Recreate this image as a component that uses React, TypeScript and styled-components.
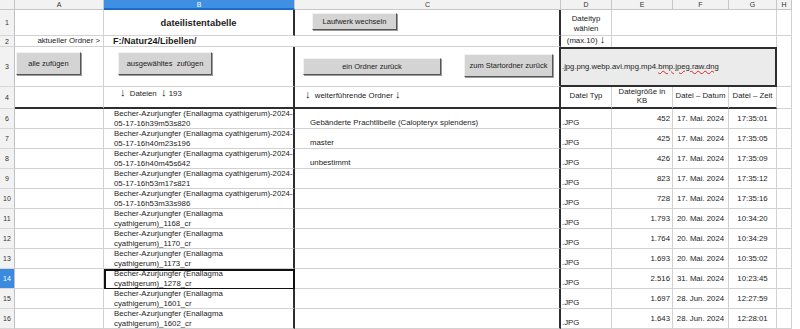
import { FC } from "react";
import styled, { createGlobalStyle } from "styled-components";

const GlobalStyle = createGlobalStyle`
  html, body {
    margin: 0;
    padding: 0;
    background: #ffffff;
  }
  body {
    font-family: "Liberation Sans", Arial, sans-serif;
    overflow: hidden;
  }
`;

const GRID = "#d2d2d2";
const THICK = "2px solid #2e2e2e";

type Align = "flex-start" | "center" | "flex-end";

const Sheet = styled.div`
  display: grid;
  grid-template-columns: 15px 89px 191px 266px 51px 61px 56px 48px 15px 1fr;
  grid-template-rows: 10px 26px 11px 40px 22px repeat(11, 20px);
  width: 800px;
  height: 329px;
  overflow: hidden;
  color: #1c1c1c;
`;

const ColHead = styled.div<{ $active?: boolean; $blank?: boolean }>`
  display: flex;
  align-items: center;
  justify-content: center;
  box-sizing: border-box;
  font-size: 7px;
  background: ${(p) => (p.$active ? "#3f8fe2" : p.$blank ? "#ffffff" : "#f2f2f2")};
  color: ${(p) => (p.$active ? "#ffffff" : "#333333")};
  border-right: ${(p) => (p.$blank ? "none" : "1px solid #c6c6c6")};
  border-bottom: ${(p) =>
    p.$active ? "2px solid #1d6cc8" : p.$blank ? "none" : "1px solid #c6c6c6"};
`;

const RowNum = styled.div<{ $active?: boolean }>`
  display: flex;
  align-items: center;
  justify-content: center;
  box-sizing: border-box;
  font-size: 7px;
  background: ${(p) => (p.$active ? "#3a8be0" : "#f2f2f2")};
  color: ${(p) => (p.$active ? "#ffffff" : "#333333")};
  border-right: 1px solid #c0c0c0;
  border-bottom: 1px solid #d6d6d6;
`;

const Cell = styled.div<{
  $span?: number;
  $h?: Align;
  $v?: Align;
  $pad?: string;
  $thickR?: boolean;
  $thickB?: boolean;
  $noR?: boolean;
  $noB?: boolean;
  $bold?: boolean;
  $size?: number;
  $lh?: number;
}>`
  position: relative;
  grid-column: span ${(p) => p.$span ?? 1};
  display: flex;
  flex-direction: column;
  justify-content: ${(p) => p.$v ?? "center"};
  align-items: ${(p) => p.$h ?? "flex-start"};
  text-align: ${(p) =>
    p.$h === "center" ? "center" : p.$h === "flex-end" ? "right" : "left"};
  padding: ${(p) => p.$pad ?? "0 2px"};
  box-sizing: border-box;
  min-width: 0;
  white-space: nowrap;
  font-size: ${(p) => p.$size ?? 7.8}px;
  line-height: ${(p) => p.$lh ?? 10}px;
  font-weight: ${(p) => (p.$bold ? 700 : 400)};
  background: #ffffff;
  border-right: ${(p) =>
    p.$thickR ? THICK : p.$noR ? "none" : `1px solid ${GRID}`};
  border-bottom: ${(p) =>
    p.$thickB ? THICK : p.$noB ? "none" : `1px solid ${GRID}`};
`;

const Blank = styled.div`
  background: #ffffff;
`;

const FilterBox = styled.div`
  grid-column: span 4;
  display: flex;
  align-items: center;
  box-sizing: border-box;
  padding-left: 1px;
  padding-bottom: 2px;
  background: #ebebeb;
  border-top: ${THICK};
  border-right: ${THICK};
  border-bottom: ${THICK};
  font-size: 7.7px;
  white-space: nowrap;
  color: #1c1c1c;
`;

const Misspelled = styled.span`
  text-decoration-line: underline;
  text-decoration-style: wavy;
  text-decoration-color: #e02525;
  text-decoration-thickness: 1px;
  text-underline-offset: 1px;
`;

const Arrow = styled.span`
  font-size: 11px;
  line-height: 9px;
`;

const SheetButton = styled.button<{ $w: number; $h: number; $mt?: number }>`
  display: inline-flex;
  align-items: center;
  justify-content: center;
  box-sizing: border-box;
  width: ${(p) => p.$w}px;
  height: ${(p) => p.$h}px;
  margin-top: ${(p) => p.$mt ?? 0}px;
  padding: 0;
  background: #d4d4d4;
  border: 1px solid;
  border-color: #f2f2f2 #555555 #555555 #f2f2f2;
  box-shadow: 1px 1px 0 #9c9c9c;
  font-family: "Liberation Sans", Arial, sans-serif;
  font-size: 7.5px;
  color: #222222;
  white-space: nowrap;
  cursor: pointer;
`;

const ButtonRow = styled.div`
  display: flex;
  align-items: center;
  gap: 23px;
`;

const Selection = styled.div`
  position: absolute;
  left: 0;
  top: 0;
  right: -2px;
  bottom: -2px;
  border: 2px solid #111111;
  pointer-events: none;

  &::after {
    content: "";
    position: absolute;
    right: -4px;
    bottom: -4px;
    width: 4px;
    height: 4px;
    background: #111111;
  }
`;

type FileRow = {
  n: number;
  first: string;
  second: string;
  folder?: string;
  size: string;
  date: string;
  time: string;
};

const LONG = "Becher-Azurjungfer (Enallagma cyathigerum)-2024-";
const SHORT = "Becher-Azurjungfer (Enallagma";

const rows: FileRow[] = [
  { n: 6, first: LONG, second: "05-17-16h39m53s820", folder: "Gebänderte Prachtlibelle (Calopteryx splendens)", size: "452", date: "17. Mai. 2024", time: "17:35:01" },
  { n: 7, first: LONG, second: "05-17-16h40m23s196", folder: "master", size: "425", date: "17. Mai. 2024", time: "17:35:05" },
  { n: 8, first: LONG, second: "05-17-16h40m45s642", folder: "unbestimmt", size: "426", date: "17. Mai. 2024", time: "17:35:09" },
  { n: 9, first: LONG, second: "05-17-16h53m17s821", size: "823", date: "17. Mai. 2024", time: "17:35:12" },
  { n: 10, first: LONG, second: "05-17-16h53m33s986", size: "728", date: "17. Mai. 2024", time: "17:35:16" },
  { n: 11, first: SHORT, second: "cyathigerum)_1168_cr", size: "1.793", date: "20. Mai. 2024", time: "10:34:20" },
  { n: 12, first: SHORT, second: "cyathigerum)_1170_cr", size: "1.764", date: "20. Mai. 2024", time: "10:34:29" },
  { n: 13, first: SHORT, second: "cyathigerum)_1173_cr", size: "1.693", date: "20. Mai. 2024", time: "10:35:02" },
  { n: 14, first: SHORT, second: "cyathigerum)_1278_cr", size: "2.516", date: "31. Mai. 2024", time: "10:23:45" },
  { n: 15, first: SHORT, second: "cyathigerum)_1601_cr", size: "1.697", date: "28. Jun. 2024", time: "12:27:59" },
  { n: 16, first: SHORT, second: "cyathigerum)_1602_cr", size: "1.643", date: "28. Jun. 2024", time: "12:28:01" },
];

const SELECTED = 14;

const App: FC = () => {
  return (
    <>
      <GlobalStyle />
      <Sheet>
        {/* column letters */}
        <ColHead />
        <ColHead>A</ColHead>
        <ColHead $active>B</ColHead>
        <ColHead>C</ColHead>
        <ColHead>D</ColHead>
        <ColHead>E</ColHead>
        <ColHead>F</ColHead>
        <ColHead>G</ColHead>
        <ColHead>H</ColHead>
        <ColHead $blank />

        {/* row 1 */}
        <RowNum>1</RowNum>
        <Cell />
        <Cell $h="center" $bold $size={9.4} $lh={12} $thickR>
          dateilistentabelle
        </Cell>
        <Cell $v="flex-start" $pad="3px 0 0 17px" $thickR>
          <SheetButton $w={85} $h={17}>Laufwerk wechseln</SheetButton>
        </Cell>
        <Cell $h="center" $pad="3px 0 0">
          <span>Dateityp</span>
          <span>wählen</span>
        </Cell>
        <Cell $span={3} />
        <Cell />
        <Blank />

        {/* row 2 */}
        <RowNum>2</RowNum>
        <Cell $h="flex-end" $pad="0 3px 0 0">
          aktueller Ordner &gt;
        </Cell>
        <Cell $span={2} $bold $size={9} $pad="0 0 0 9px" $thickR>
          F:/Natur24/Libellen/
        </Cell>
        <Cell $h="center" $pad="0 0 3px" $noB>
          <span>
            (max.10) <Arrow>↓</Arrow>
          </span>
        </Cell>
        <Cell $span={3} $noB />
        <Cell $noB />
        <Blank />

        {/* row 3 */}
        <RowNum>3</RowNum>
        <Cell $v="flex-start" $pad="5px 0 0 1px">
          <SheetButton $w={65} $h={23}>alle zufügen</SheetButton>
        </Cell>
        <Cell $v="flex-start" $pad="5px 0 0 14px" $thickR>
          <SheetButton $w={94} $h={23}>ausgewähltes&nbsp; zufügen</SheetButton>
        </Cell>
        <Cell $pad="0 0 3px 8px" $thickR>
          <ButtonRow>
            <SheetButton $w={138} $h={17} $mt={2}>ein Ordner zurück</SheetButton>
            <SheetButton $w={89} $h={23}>zum Startordner zurück</SheetButton>
          </ButtonRow>
        </Cell>
        <FilterBox>
          .jpg.png.webp.avi.mpg.mp4.<Misspelled>bmp.jpeg.raw.dng</Misspelled>
        </FilterBox>
        <Cell />
        <Blank />

        {/* row 4 */}
        <RowNum>4</RowNum>
        <Cell $thickB />
        <Cell $v="flex-start" $pad="1px 0 0 16px" $thickR $thickB>
          <span>
            <Arrow>↓</Arrow>&nbsp; Dateien&nbsp; <Arrow>↓</Arrow> 193
          </span>
        </Cell>
        <Cell $v="flex-start" $pad="3px 0 0 10px" $thickR $thickB>
          <span>
            <Arrow>↓</Arrow>&nbsp; weiterführende Ordner <Arrow>↓</Arrow>
          </span>
        </Cell>
        <Cell $h="center" $pad="0 0 2px" $thickB>
          Datei Typ
        </Cell>
        <Cell $h="center" $pad="0 0 2px" $lh={9} $thickB>
          <span>Dateigröße in</span>
          <span>KB</span>
        </Cell>
        <Cell $h="center" $pad="0 0 2px" $thickB>
          Datei – Datum
        </Cell>
        <Cell $h="center" $pad="0 0 2px" $thickB>
          Datei – Zeit
        </Cell>
        <Cell />
        <Blank />

        {/* file rows */}
        {rows.map((r) => (
          <FileRowCells key={r.n} row={r} selected={r.n === SELECTED} />
        ))}
      </Sheet>
    </>
  );
};

const FileRowCells: FC<{ row: FileRow; selected: boolean }> = ({ row, selected }) => (
  <>
    <RowNum $active={selected}>{row.n}</RowNum>
    <Cell />
    <Cell $v="flex-start" $pad="0 0 0 10px" $thickR>
      <span>{row.first}</span>
      <span>{row.second}</span>
      {selected && <Selection />}
    </Cell>
    <Cell $v="flex-end" $pad="0 0 0 15px" $thickR>
      {row.folder ?? ""}
    </Cell>
    <Cell $v="flex-end" $pad="0 0 0 1px">
      .JPG
    </Cell>
    <Cell $h="flex-end" $pad="0 2px 0 0">
      {row.size}
    </Cell>
    <Cell $h="center" $pad="0">
      {row.date}
    </Cell>
    <Cell $h="center" $pad="0">
      {row.time}
    </Cell>
    <Cell />
    <Blank />
  </>
);

export default App;
